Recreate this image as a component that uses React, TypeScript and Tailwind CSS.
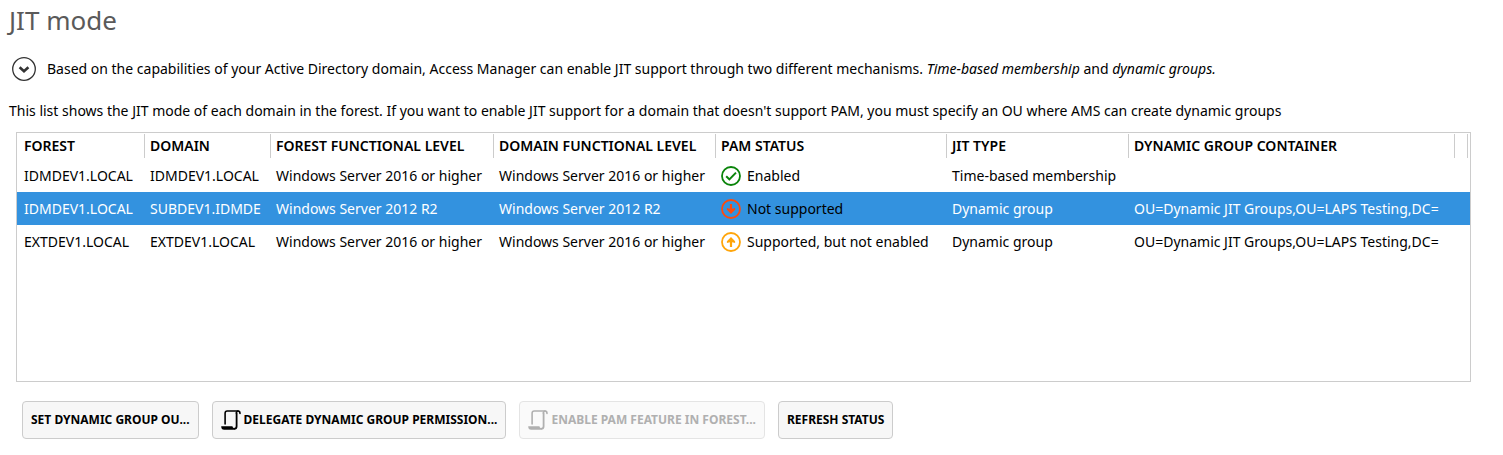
import React from "react";

type Status = "enabled" | "unsupported" | "available";

interface DomainRow {
  forest: string;
  domain: string;
  forestLevel: string;
  domainLevel: string;
  status: Status;
  statusText: string;
  jitType: string;
  container: string;
  selected?: boolean;
}

const rows: DomainRow[] = [
  {
    forest: "IDMDEV1.LOCAL",
    domain: "IDMDEV1.LOCAL",
    forestLevel: "Windows Server 2016 or higher",
    domainLevel: "Windows Server 2016 or higher",
    status: "enabled",
    statusText: "Enabled",
    jitType: "Time-based membership",
    container: "",
  },
  {
    forest: "IDMDEV1.LOCAL",
    domain: "SUBDEV1.IDMDE",
    forestLevel: "Windows Server 2012 R2",
    domainLevel: "Windows Server 2012 R2",
    status: "unsupported",
    statusText: "Not supported",
    jitType: "Dynamic group",
    container: "OU=Dynamic JIT Groups,OU=LAPS Testing,DC=",
    selected: true,
  },
  {
    forest: "EXTDEV1.LOCAL",
    domain: "EXTDEV1.LOCAL",
    forestLevel: "Windows Server 2016 or higher",
    domainLevel: "Windows Server 2016 or higher",
    status: "available",
    statusText: "Supported, but not enabled",
    jitType: "Dynamic group",
    container: "OU=Dynamic JIT Groups,OU=LAPS Testing,DC=",
  },
];

const headers = [
  "FOREST",
  "DOMAIN",
  "FOREST FUNCTIONAL LEVEL",
  "DOMAIN FUNCTIONAL LEVEL",
  "PAM STATUS",
  "JIT TYPE",
  "DYNAMIC GROUP CONTAINER",
];

function StatusIcon({ status }: { status: Status }) {
  const color =
    status === "enabled" ? "#0a840a" : status === "unsupported" ? "#ff4a0c" : "#ffa50a";
  return (
    <svg viewBox="0 0 20 20" className="size-5 shrink-0" fill="none" stroke={color} aria-hidden="true">
      <circle cx="10" cy="10" r="9" strokeWidth="1.8" />
      {status === "enabled" && <path d="M5.2 10.2l3.2 3.2 6.6-6.8" strokeWidth="2" />}
      {status === "unsupported" && (
        <path d="M8.9 5h2.2v4.8l3-.9v1.9L10 15l-4.1-4.2V8.9l3 .9z" fill={color} stroke="none" />
      )}
      {status === "available" && (
        <path d="M8.9 15h2.2v-4.8l3 .9V9.2L10 5 5.9 9.2v1.9l3-.9z" fill={color} stroke="none" />
      )}
    </svg>
  );
}

function ScriptIcon() {
  return (
    <svg viewBox="0 0 20 20" className="size-5 shrink-0" fill="none" stroke="currentColor" aria-hidden="true">
      <path d="M4.1 14V3.2Q4.1 1 6.3 1H17Q19 1 19 3.4" strokeWidth="1.6" strokeLinecap="round" />
      <path d="M15.6 2.6V16.2Q15.6 18.9 13 18.9" strokeWidth="1.8" />
      <path d="M17.6 .9Q15.2 1 15.2 3.6" strokeWidth="1.4" />
      <path
        d="M.2 16.2H11.4Q11.6 18.1 13.6 18.1V19.8H3.2Q.2 19.8 .2 16.2z"
        fill="currentColor"
        stroke="none"
      />
    </svg>
  );
}

function ActionButton({
  children,
  icon,
  disabled,
}: {
  children: React.ReactNode;
  icon?: boolean;
  disabled?: boolean;
}) {
  return (
    <button
      type="button"
      disabled={disabled}
      className="flex h-[38px] items-center gap-[3px] rounded border border-[#cccccc] bg-[#f7f7f7] px-2 text-[12px] font-bold whitespace-nowrap text-black disabled:border-[#e4e4e4] disabled:bg-[#fafafa] disabled:text-[#b0b0b0]"
    >
      {icon && <ScriptIcon />}
      {children}
    </button>
  );
}

export default function App() {
  return (
    <main className="bg-white pr-8 pb-4 font-['Noto_Sans','Open_Sans',sans-serif] text-[14px] leading-5 text-black">
      <h1 className="pt-1 pl-[9px] text-[26px] leading-8 text-[#5a5a5a]">JIT mode</h1>

      <div className="mt-[21px] flex items-center gap-[11px] pl-3">
        <button type="button" aria-label="Toggle details" className="size-6 shrink-0">
          <svg viewBox="0 0 24 24" className="size-6" fill="none" stroke="#333333" aria-hidden="true">
            <circle cx="12" cy="12" r="11.3" strokeWidth="1.3" />
            <path d="M7.6 10.2l4.4 4 4.4-4" strokeWidth="2.6" />
          </svg>
        </button>
        <p>
          Based on the capabilities of your Active Directory domain, Access Manager can enable JIT
          support through two different mechanisms. <em>Time-based membership</em> and{" "}
          <em>dynamic groups.</em>
        </p>
      </div>

      <p className="mt-5 pl-[9px]">
        This list shows the JIT mode of each domain in the forest. If you want to enable JIT support
        for a domain that doesn't support PAM, you must specify an OU where AMS can create dynamic
        groups
      </p>

      <div className="mt-[11px] ml-4 min-h-[250px] overflow-hidden border border-[#cccccc]">
        <table className="w-full table-fixed border-collapse text-left whitespace-nowrap">
          <colgroup>
            <col className="w-[128px]" />
            <col className="w-[126px]" />
            <col className="w-[223px]" />
            <col className="w-[222px]" />
            <col className="w-[231px]" />
            <col className="w-[182px]" />
            <col />
            <col className="w-[13px]" />
            <col className="w-[2px]" />
          </colgroup>
          <thead>
            <tr>
              {headers.map((h) => (
                <th key={h} scope="col" className="p-0 pt-px pb-px align-top font-semibold">
                  <div className="h-6 border-r border-[#cccccc] pl-[5px] leading-6 in-[th:first-child]:pl-[7px]">
                    {h}
                  </div>
                </th>
              ))}
              <td className="p-0 pt-px align-top">
                <div className="h-6 border-r border-[#cccccc]" />
              </td>
              <td className="p-0" />
            </tr>
          </thead>
          <tbody>
            {rows.map((r) => (
              <tr
                key={r.domain}
                aria-selected={!!r.selected}
                className="h-[33px] aria-selected:bg-[#3392df] aria-selected:text-white"
              >
                <td className="p-0 pl-[7px]">{r.forest}</td>
                <td className="p-0 pl-[5px]">{r.domain}</td>
                <td className="p-0 pl-[5px]">{r.forestLevel}</td>
                <td className="p-0 pl-[5px]">{r.domainLevel}</td>
                <td className="p-0 pl-[5px]">
                  <div className="flex items-center gap-[6px] text-black">
                    <StatusIcon status={r.status} />
                    {r.statusText}
                  </div>
                </td>
                <td className="p-0 pl-[5px]">{r.jitType}</td>
                <td className="p-0 pr-[9px] pl-[5px]">
                  <div className="overflow-hidden">{r.container}</div>
                </td>
                <td className="p-0" />
                <td className="p-0" />
              </tr>
            ))}
          </tbody>
        </table>
      </div>

      <div className="mt-[19px] flex gap-[13px] pl-[22px]">
        <ActionButton>SET DYNAMIC GROUP OU...</ActionButton>
        <ActionButton icon>DELEGATE DYNAMIC GROUP PERMISSION...</ActionButton>
        <ActionButton icon disabled>
          ENABLE PAM FEATURE IN FOREST...
        </ActionButton>
        <ActionButton>REFRESH STATUS</ActionButton>
      </div>
    </main>
  );
}
